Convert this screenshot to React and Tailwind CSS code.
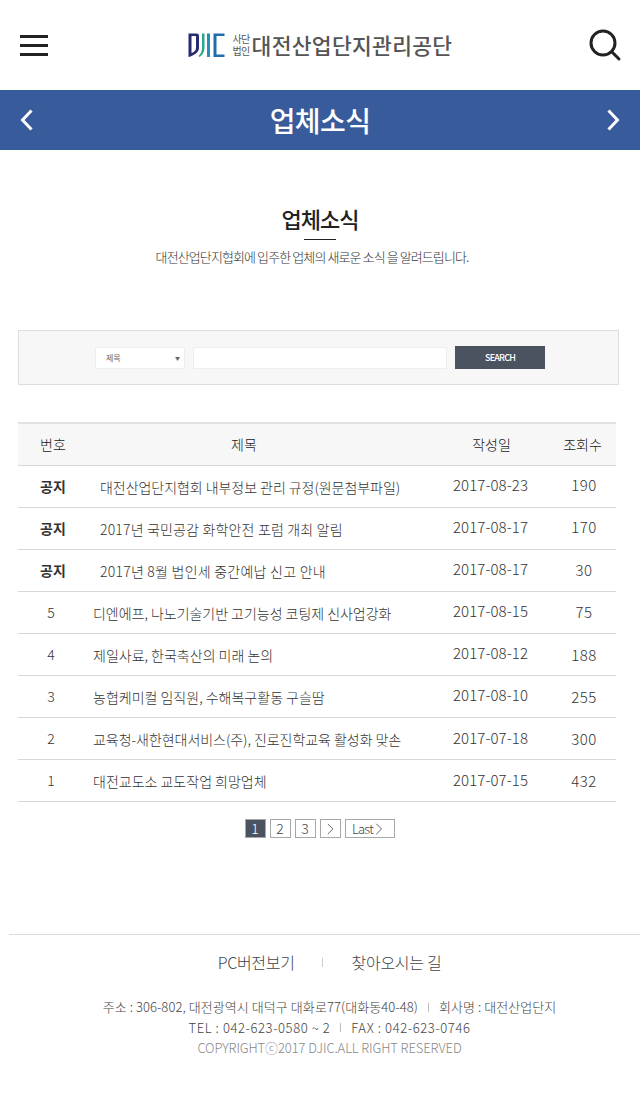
import React from "react";
import { ChevronRight } from "lucide-react";

const F = "[font-family:'Noto_Sans_CJK_KR','Noto_Sans',sans-serif]";

const rows = [
  { no: "공지", title: "대전산업단지협회 내부정보 관리 규정(원문첨부파일)", date: "2017-08-23", count: "190", tt: "tracking-[-0.05px]", dp: "pb-[3px]", cp: "pb-[2px]" },
  { no: "공지", title: "2017년 국민공감 화학안전 포럼 개최 알림", date: "2017-08-17", count: "170", tt: "tracking-[0.17px]", dp: "pb-[3px]", cp: "pb-[2px]" },
  { no: "공지", title: "2017년 8월 법인세 중간예납 신고 안내", date: "2017-08-17", count: "30", tt: "tracking-[0.24px]", dp: "pb-[3px]", cp: "pb-[0px]" },
  { no: "5", title: "디엔에프, 나노기술기반 고기능성 코팅제 신사업강화", date: "2017-08-15", count: "75", tt: "tracking-[-0.03px]", dp: "pb-[3px]", cp: "pb-[0px]" },
  { no: "4", title: "제일사료, 한국축산의 미래 논의", date: "2017-08-12", count: "188", tt: "tracking-[0px]", dp: "pb-[3px]", cp: "pt-[2px]" },
  { no: "3", title: "농협케미컬 임직원, 수해복구활동 구슬땀", date: "2017-08-10", count: "255", tt: "tracking-[0px]", dp: "pb-[3px]", cp: "pt-[2px]" },
  { no: "2", title: "교육청-새한현대서비스(주), 진로진학교육 활성화 맞손", date: "2017-07-18", count: "300", tt: "tracking-[-0.05px]", dp: "pb-[0px]", cp: "pt-[2px]" },
  { no: "1", title: "대전교도소 교도작업 희망업체", date: "2017-07-15", count: "432", tt: "tracking-[0px]", dp: "pb-[0px]", cp: "pt-[2px]" },
];

function Logo() {
  return (
    <svg width="37" height="24" viewBox="0 0 37 24" className="shrink-0">
      <path d="M0.5 0.5H8.5C10.5 0.5 11 1.5 11 3V15C11 19 7 22 1 24H0.5Z M3.5 3V20C6 19 8 17.5 8 15V4C8 3.3 7.7 3 7 3Z" fill="#2a2a72" fillRule="evenodd" />
      <path d="M14 0.5H16.5V14C16.5 19 14.5 22 11.5 24L10.5 23C13 21 14 18 14 14Z" fill="#2aa88f" />
      <rect x="19" y="0.5" width="3" height="23.5" fill="#2a8fb5" />
      <path d="M25.5 0.5H36.5V3H28.5V21.5H36.5V24H25.5Z" fill="#1f6fae" />
    </svg>
  );
}

function Row({ row }) {
  const notice = row.no === "공지";
  return (
    <div className="grid grid-cols-[70px_343px_121px_64px] h-[42px] border-b border-[#d8d8d8] items-center text-[14px] font-light text-[#333]">
      <div className={notice ? "text-center font-bold text-[#333]" : "text-center pr-[4px]"}>{row.no}</div>
      <div className={`${notice ? "pl-[12px]" : "pl-[5px]"} pt-[2px] whitespace-nowrap ${row.tt}`}>{row.title}</div>
      <div className={`text-center text-[15px] tracking-[0.1px] pr-[2px] ${row.dp}`}>{row.date}</div>
      <div className={`text-center text-[15px] tracking-[0.4px] ${row.cp}`}>{row.count}</div>
    </div>
  );
}

function PageBox({ children, active, wide }) {
  return (
    <div
      className={`h-[19px] ${wide ? "w-[50px] pl-[2px]" : "w-[21px]"} flex items-center justify-center border border-[#a8a8a8] text-[14px] font-light ${
        active ? "bg-[#4b5360] text-white" : "bg-white text-[#444]"
      }`}
    >
      {children}
    </div>
  );
}

export default function App() {
  return (
    <div className={`w-[640px] h-[1099px] bg-white overflow-hidden ${F}`}>
      <header className="h-[90px] flex items-center justify-between pl-[20px] pr-[18px]">
        <div className="flex flex-col gap-[6px] w-[28px]">
          <span className="h-[3px] bg-[#222]" />
          <span className="h-[3px] bg-[#222]" />
          <span className="h-[3px] bg-[#222]" />
        </div>
        <div className="flex items-center ml-[4px]">
          <Logo />
          <div className="ml-[6px] w-[21px] text-[10px] leading-[12px] text-[#555] text-center tracking-[-0.5px]">
            <div>사단</div>
            <div>법인</div>
          </div>
          <div className="text-[21.5px] font-medium text-[#555] tracking-[0.3px] leading-none whitespace-nowrap">대전산업단지관리공단</div>
        </div>
        <svg width="34" height="34" viewBox="0 0 34 34" fill="none" stroke="#222" strokeWidth="3" strokeLinecap="round">
          <circle cx="15" cy="15" r="12" />
          <path d="M24 24L31 31" />
        </svg>
      </header>

      <div className="h-[60px] bg-[#385c9b] flex items-center justify-between px-[20px] text-white">
        <svg width="13" height="22" viewBox="0 0 13 22" fill="none" stroke="#fff" strokeWidth="3">
          <path d="M11.5 1.5L2.5 11L11.5 20.5" />
        </svg>
        <h1 className="text-[28px] font-medium tracking-[-0.6px] leading-none">업체소식</h1>
        <svg width="13" height="22" viewBox="0 0 13 22" fill="none" stroke="#fff" strokeWidth="3">
          <path d="M1.5 1.5L10.5 11L1.5 20.5" />
        </svg>
      </div>

      <div className="flex flex-col items-center pt-[53px]">
        <h2 className="text-[22px] font-medium text-[#222] tracking-[-1px] leading-[30px]">업체소식</h2>
        <div className="w-[32px] h-px bg-[#222] mt-[6px]" />
        <p className="mt-[7px] pr-[16px] text-[13px] font-light text-[#333] tracking-[-0.9px] leading-[20px] whitespace-nowrap">대전산업단지협회에 입주한 업체의 새로운 소식 을 알려드립니다.</p>
      </div>

      <div className="mt-[63px] ml-[18px] w-[601px] h-[55px] bg-[#f7f7f7] border border-[#dedede] flex items-center pl-[76px] gap-[8px]">
        <div className="w-[90px] h-[22px] bg-white border border-[#eee] flex items-center justify-between pl-[10px] pr-[4px] text-[8px] text-[#666]">
          <span>제목</span>
          <span className="text-[5px]">▼</span>
        </div>
        <div className="w-[254px] h-[22px] bg-white border border-[#eee]" />
        <div className="w-[90px] h-[23px] bg-[#4b5360] text-white text-[9px] font-medium tracking-[-0.8px] flex items-center justify-center">SEARCH</div>
      </div>

      <div className="mt-[37px] ml-[18px] w-[598px] border-t-2 border-[#e2e2e2]">
        <div className="grid grid-cols-[70px_343px_121px_64px] h-[42px] bg-[#f7f7f7] border-b border-[#d8d8d8] items-center text-[14px] font-light text-[#222]">
          <div className="text-center pb-[1px]">번호</div>
          <div className="text-center pr-[31px] pb-[1px]">제목</div>
          <div className="text-center pl-[0px] pb-[1px]">작성일</div>
          <div className="text-center pr-[3px] pb-[1px]">조회수</div>
        </div>
        {rows.map((r) => (
          <Row key={r.title} row={r} />
        ))}
      </div>

      <div className="mt-[17px] flex justify-center gap-[4px] pl-[1px] pr-[2px]">
        <PageBox active>1</PageBox>
        <PageBox>2</PageBox>
        <PageBox>3</PageBox>
        <PageBox>
          <ChevronRight size={20} strokeWidth={1} />
        </PageBox>
        <PageBox wide>
          <span className="tracking-[-0.8px] text-[13px]">Last</span>
          <ChevronRight size={20} strokeWidth={1} className="-ml-[4px]" />
        </PageBox>
      </div>

      <footer className="mt-[96px] ml-[9px] border-t border-[#dcdcdc] flex flex-col items-center pl-[10px]">
        <div className="mt-[15px] h-[24px] flex items-center text-[16px] font-light text-[#444] tracking-[-0.3px]">
          <span>PC버전보기</span>
          <span className="w-px h-[9px] bg-[#ccc] ml-[27px] mr-[29px]" />
          <span>찾아오시는 길</span>
        </div>
        <div className="mt-[23px] text-[13px] font-light leading-[20.5px] text-[#444] text-center">
          <div className="flex items-center justify-center whitespace-nowrap tracking-[0.07px]">
            <span>주소 : 306-802, 대전광역시 대덕구 대화로77(대화동40-48)</span>
            <span className="w-px h-[9px] bg-[#bbb] mx-[10px]" />
            <span>회사명 : 대전산업단지</span>
          </div>
          <div className="flex items-center justify-center whitespace-nowrap tracking-[0.6px]">
            <span>TEL : 042-623-0580 ~ 2</span>
            <span className="w-px h-[9px] bg-[#bbb] mx-[10px]" />
            <span>FAX : 042-623-0746</span>
          </div>
          <div className="text-[#888] whitespace-nowrap tracking-[-0.1px]">COPYRIGHTⓒ2017 DJIC.ALL RIGHT RESERVED</div>
        </div>
      </footer>
    </div>
  );
}
